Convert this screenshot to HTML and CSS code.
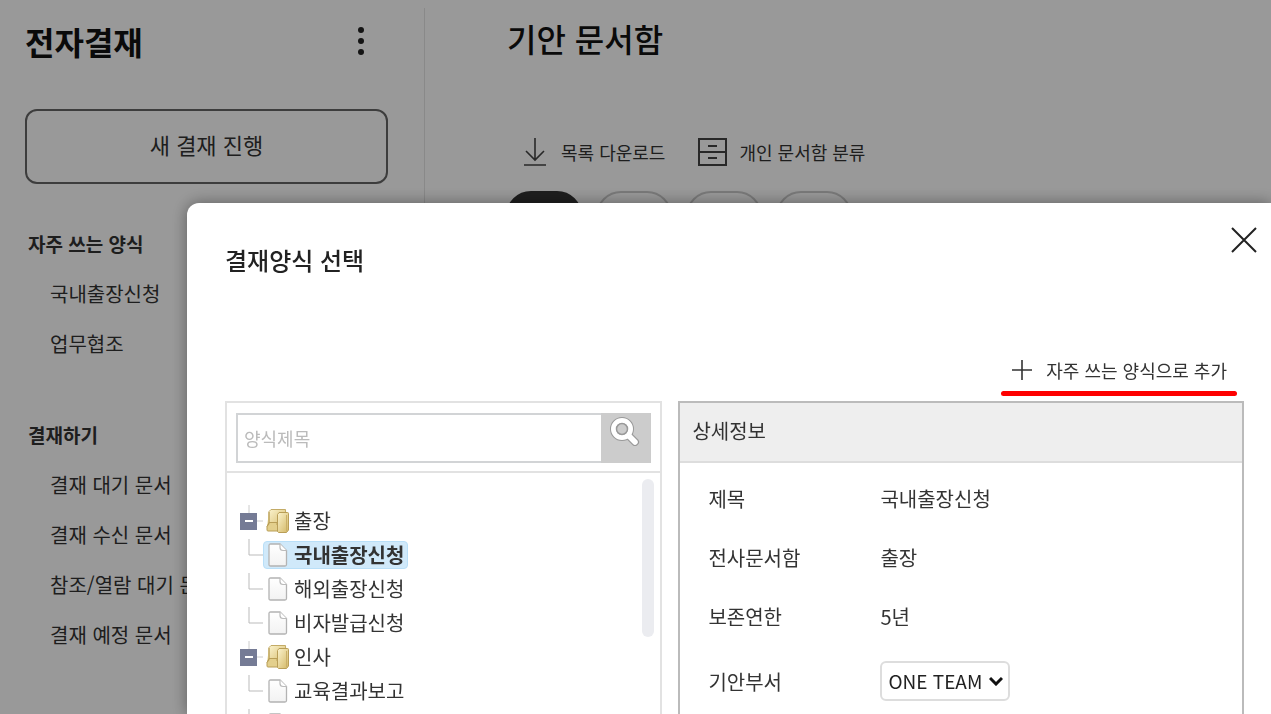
FILE: index.html
```html
<!DOCTYPE html>
<html lang="ko">
<head>
<meta charset="utf-8">
<title>전자결재</title>
<link rel="stylesheet" href="styles.css">
</head>
<body>
<svg width="0" height="0" class="defs" aria-hidden="true">
  <defs>
    <linearGradient id="gold" x1="0" y1="0" x2="1" y2="1"><stop offset="0" stop-color="#fbf3cd"/><stop offset="1" stop-color="#d3b765"/></linearGradient>
    <linearGradient id="paper" x1="0" y1="0" x2="0" y2="1"><stop offset="0" stop-color="#fff"/><stop offset="1" stop-color="#f2f2f2"/></linearGradient>
    <symbol id="folder" viewBox="0 0 24 26">
      <path d="M3 3.500 5 1.500H19.500L20 20H3z" fill="url(#gold)" stroke="#c3ab66"/>
      <path d="M1 18.500 3 16v-12M1 18.500V22q0 1 1 1h12v-3l-3-3V14.500H3z" fill="#e3cf8c" stroke="#b99e57"/>
      <path d="M11.500 6.500 13 4.500h8.500q1 0 1 1V22l-2 2.500h-8l-1-1z" fill="url(#gold)" stroke="#b99e57"/>
      <path d="M20.500 7v16" stroke="#c9af68" fill="none"/>
    </symbol>
    <symbol id="file" viewBox="0 0 20 24">
      <path d="M2.500 1H12l6.500 6.500V21.500q0 1.500-1.500 1.500H2.500Q1 23 1 21.500v-19Q1 1 2.500 1z" fill="url(#paper)" stroke="#b3b3b3" stroke-width="1.300"/>
      <path d="M12 1v3.500q0 3 3 3h3.500" fill="#fff" stroke="#bbb" stroke-width="1.200"/>
    </symbol>
  </defs>
</svg>
<div class="app">
  <aside class="sidebar">
    <header class="side-head">
      <h1 class="title">전자결재</h1>
      <button class="icon-btn" aria-label="더보기"><svg width="8" height="30" viewBox="0 0 8 30" fill="#222"><circle cx="4" cy="4" r="3"/><circle cx="4" cy="15" r="3"/><circle cx="4" cy="26" r="3"/></svg></button>
    </header>
    <button class="new-btn">새 결재 진행</button>
    <nav class="menu">
      <section>
        <h2 class="menu-title">자주 쓰는 양식</h2>
        <ul class="menu-list">
          <li><a href="#">국내출장신청</a></li>
          <li><a href="#">업무협조</a></li>
        </ul>
      </section>
      <section>
        <h2 class="menu-title">결재하기</h2>
        <ul class="menu-list">
          <li><a href="#">결재 대기 문서</a></li>
          <li><a href="#">결재 수신 문서</a></li>
          <li><a href="#">참조/열람 대기 문서</a></li>
          <li><a href="#">결재 예정 문서</a></li>
        </ul>
      </section>
    </nav>
  </aside>
  <main class="content">
    <h1 class="title page-title">기안 문서함</h1>
    <div class="toolbar">
      <button class="tool"><svg width="24" height="28" viewBox="0 0 24 28" fill="none" stroke="#444" stroke-width="1.600"><path d="M12 0v22M3 13l9 9 9-9M1 27h22"/></svg>목록 다운로드</button>
      <button class="tool"><svg width="30" height="28" viewBox="0 0 30 28" fill="none" stroke="#444" stroke-width="2"><path d="M2 1h27v26H2zM2 14h27M11 8h9M11 20h9"/></svg>개인 문서함 분류</button>
    </div>
    <div class="pills">
      <button class="pill pill-on" aria-label="필터 1"></button>
      <button class="pill" aria-label="필터 2"></button>
      <button class="pill" aria-label="필터 3"></button>
      <button class="pill" aria-label="필터 4"></button>
    </div>
  </main>
</div>

<div class="overlay">
  <div class="modal" role="dialog" aria-labelledby="modal-title">
    <header class="modal-head">
      <h2 class="modal-title" id="modal-title">결재양식 선택</h2>
      <button class="icon-btn close" aria-label="닫기"><svg width="28" height="28" viewBox="0 0 28 28" stroke="#222" stroke-width="2"><path d="M2 2l24 24M26 2L2 26"/></svg></button>
    </header>
    <div class="modal-tools">
      <button class="add-btn"><svg width="20" height="20" viewBox="0 0 20 20" stroke="#333" stroke-width="1.600"><path d="M10 0v20M0 10h20"/></svg>자주 쓰는 양식으로 추가</button>
    </div>
    <div class="columns">
      <section class="forms">
        <form class="search">
          <input class="search-input" type="text" placeholder="양식제목" aria-label="양식제목">
          <button class="search-btn" type="button" aria-label="검색"><svg width="30" height="30" viewBox="0 0 30 30" fill="none"><path d="M19 20l6 6" stroke="#999" stroke-width="8" stroke-linecap="round"/><circle cx="12" cy="13" r="9" stroke="#999" stroke-width="6"/><path d="M18 19l7 7" stroke="#fff" stroke-width="5.500" stroke-linecap="round"/><circle cx="12" cy="13" r="8.500" stroke="#fff" stroke-width="5"/><circle cx="12" cy="13" r="5.500" fill="#ccc" stroke="#999" stroke-width="1.500"/></svg></button>
        </form>
        <div class="tree-box">
          <ul class="tree">
            <li class="row"><svg class="guide" viewBox="0 0 24 34"><path d="M10 1v8M18 17h6" stroke="#ccc"/><path d="M1 9h17v17H1z" fill="#757b95"/><path d="M6 17h8" stroke="#fff" stroke-width="2"/></svg><span class="node"><svg width="24" height="26"><use href="#folder"/></svg>출장</span></li>
            <li class="row"><svg class="guide" viewBox="0 0 24 34"><path d="M10 1v16h14" fill="none" stroke="#bbb"/></svg><span class="node node-on"><svg width="24" height="24"><use href="#file"/></svg>국내출장신청</span></li>
            <li class="row"><svg class="guide" viewBox="0 0 24 34"><path d="M10 1v16h14" fill="none" stroke="#bbb"/></svg><span class="node"><svg width="24" height="24"><use href="#file"/></svg>해외출장신청</span></li>
            <li class="row"><svg class="guide" viewBox="0 0 24 34"><path d="M10 1v16h14" fill="none" stroke="#bbb"/></svg><span class="node"><svg width="24" height="24"><use href="#file"/></svg>비자발급신청</span></li>
            <li class="row"><svg class="guide" viewBox="0 0 24 34"><path d="M10 1v8M18 17h6" stroke="#ccc"/><path d="M1 9h17v17H1z" fill="#757b95"/><path d="M6 17h8" stroke="#fff" stroke-width="2"/></svg><span class="node"><svg width="24" height="26"><use href="#folder"/></svg>인사</span></li>
            <li class="row"><svg class="guide" viewBox="0 0 24 34"><path d="M10 1v16h14" fill="none" stroke="#bbb"/></svg><span class="node"><svg width="24" height="24"><use href="#file"/></svg>교육결과보고</span></li>
            <li class="row"><svg class="guide" viewBox="0 0 24 34"><path d="M10 1v16h14" fill="none" stroke="#bbb"/></svg><span class="node"><svg width="24" height="24"><use href="#file"/></svg></span></li>
          </ul>
          <div class="thumb"></div>
        </div>
      </section>
      <section class="detail">
        <h3 class="detail-title">상세정보</h3>
        <dl class="fields">
          <dt>제목</dt><dd>국내출장신청</dd>
          <dt>전사문서함</dt><dd>출장</dd>
          <dt>보존연한</dt><dd>5년</dd>
          <dt><label for="dept">기안부서</label></dt>
          <dd><span class="select-box"><select class="select" id="dept"><option>ONE TEAM</option></select><svg class="chevron" width="14" height="10" viewBox="0 0 14 10" fill="none" stroke="#111" stroke-width="3"><path d="M1 2l6 6 6-6"/></svg></span></dd>
        </dl>
      </section>
    </div>
  </div>
</div>
</body>
</html>
```
FILE: styles.css
```css
* { box-sizing: border-box; }
body {
  margin: 0;
  height: 100vh;
  overflow: hidden;
  background: #fff;
  color: #333;
  font-family: "Noto Sans CJK KR", "Noto Sans", sans-serif;
  font-size: 20px;
  line-height: 30px;
}
h1, h2, h3, ul, dl, dd { margin: 0; padding: 0; }
ul { list-style: none; }
button, input, select { font: inherit; color: inherit; }
button { background: none; border: 0; padding: 0; }
a { color: inherit; text-decoration: none; }
svg { flex: none; }
.defs { position: absolute; }

.app { display: flex; height: 100vh; padding-top: 8px; }
.sidebar {
  flex: 0 0 425px;
  padding: 9px 36px 0 25px;
  border-right: 1px solid #e4e4e4;
}
.side-head {
  display: flex;
  align-items: center;
  justify-content: space-between;
  height: 48px;
  padding-right: 23px;
}
.title { font-size: 32px; line-height: 48px; font-weight: 700; color: #111; }
.icon-btn { display: flex; }
.new-btn {
  width: 100%;
  height: 75px;
  margin-top: 44px;
  padding-bottom: 5px;
  border: 2px solid #666;
  border-radius: 12px;
  font-size: 22px;
}
.menu { display: flex; flex-direction: column; gap: 41px; padding: 35px 0 0 3px; }
.menu-title { font-size: 19px; line-height: 50px; font-weight: 700; }
.menu-list { padding-left: 22px; line-height: 50px; white-space: nowrap; }

.content { flex: 1; padding: 6px 0 0 81px; }
.page-title { font-weight: 500; padding-left: 1px; }
.toolbar { display: flex; gap: 32px; padding: 75px 0 0 17px; }
.tool { display: flex; align-items: center; gap: 12px; height: 30px; font-size: 18px; }
.tool:first-child { gap: 14px; }
.pills { display: flex; gap: 14px; padding-top: 24px; }
.pill { width: 76px; height: 50px; border: 2px solid #ccc; border-radius: 25px; }
.pill-on { background: #333; border-color: #333; }

.overlay {
  position: fixed;
  inset: 0;
  display: flex;
  padding: 203px 0 0 187px;
  background: rgba(0, 0, 0, 0.4);
}
.modal {
  flex: 1;
  display: flex;
  flex-direction: column;
  overflow: hidden;
  padding: 23px 27px 0 38px;
  background: #fff;
  border-radius: 12px 0 0 0;
  box-shadow: 0 0 16px rgba(0, 0, 0, 0.4);
}
.modal-head { display: flex; justify-content: space-between; align-items: flex-start; height: 68px; }
.modal-title { font-size: 24px; line-height: 68px; font-weight: 500; color: #222; }
.close { margin: 0 -14px 0 0; }
.modal-tools { display: flex; justify-content: flex-end; padding: 57px 7px 0 0; }
.add-btn {
  display: flex;
  align-items: center;
  gap: 14px;
  height: 45px;
  padding: 0 10px 8px 11px;
  position: relative;
  font-size: 18px;
}
.add-btn::after {
  content: "";
  position: absolute;
  inset: auto 0 0 0;
  height: 5px;
  border-radius: 3px;
  background: #fe0000;
}
.columns { flex: 1; display: grid; grid-template-columns: 437fr 565fr; gap: 16px; padding-top: 5px; }
.forms { border: 2px solid #e2e2e2; border-bottom: 0; }
.search { display: flex; padding: 10px 9px 8px; border-bottom: 2px solid #e2e2e2; }
.search-input {
  flex: 1;
  min-width: 0;
  height: 50px;
  padding: 0 6px;
  border: 2px solid #d2d4d6;
  border-right: 0;
  border-radius: 0;
  font-size: 18px;
  outline: 0;
}
.search-input::placeholder { color: #bbb; }
.search-btn { display: flex; justify-content: center; width: 50px; padding: 3px 2px 0 0; background: #ccc; }
.tree-box { display: flex; justify-content: space-between; padding: 6px 6px 0 12px; }
.tree { padding-top: 25px; }
.row { display: flex; align-items: center; height: 34px; }
.guide { width: 24px; height: 34px; }
.node {
  display: flex;
  align-items: center;
  gap: 4px;
  height: 28px;
  padding: 0 3px 0 2px;
  border: 1px solid transparent;
  border-radius: 4px;
}
.node-on { background: #d0e9fa; border-color: #b9dff8; font-weight: 700; }
.thumb { width: 12px; height: 158px; border-radius: 6px; background: #ebecf0; }

.detail { border: 2px solid #bbb; border-bottom: 0; }
.detail-title {
  padding: 0 12px 2px;
  background: #eee;
  border-bottom: 2px solid #ddd;
  font-size: 20px;
  line-height: 56px;
  font-weight: 400;
}
.fields { display: grid; grid-template-columns: 172px 1fr; padding: 6px 28px; line-height: 59px; }
.fields dt:last-of-type, .fields dd:last-of-type { padding-top: 6px; }
.select-box { position: relative; display: flex; width: 130px; height: 40px; margin-top: 9px; }
.select {
  flex: 1;
  appearance: none;
  padding: 0 6px;
  background: #fff;
  border: 2px solid #ddd;
  border-radius: 6px;
  font-size: 19px;
  line-height: 30px;
  color: #222;
}
.chevron { position: absolute; right: 7px; top: 15px; }
```
